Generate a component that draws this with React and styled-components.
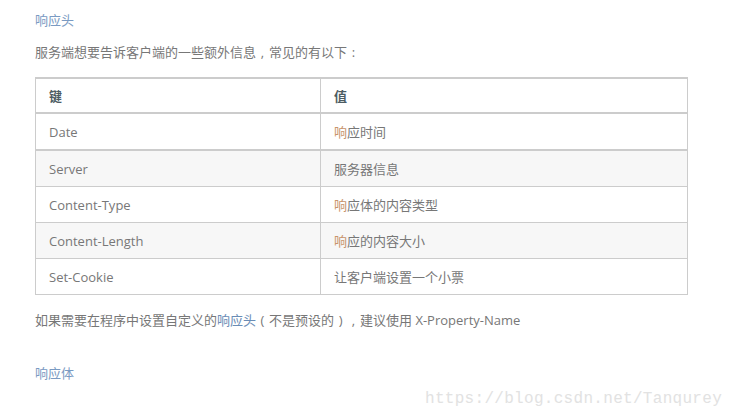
import React from 'react';
import styled, { createGlobalStyle } from 'styled-components';

const GlobalStyle = createGlobalStyle`
  html, body {
    margin: 0;
    padding: 0;
    background: #fff;
  }
  body {
    font-family: "Open Sans", "Noto Sans CJK SC", sans-serif;
    font-size: 13px;
    color: #777;
  }
`;

const rows = [
  { key: 'Date', value: '时间', hl: true, alt: false, thick: true },
  { key: 'Server', value: '服务器信息', hl: false, alt: true },
  { key: 'Content-Type', value: '体的内容类型', hl: true, alt: false },
  { key: 'Content-Length', value: '的内容大小', hl: true, alt: true },
  { key: 'Set-Cookie', value: '让客户端设置一个小票', hl: false, alt: false },
];

const App = () => (
  <Page>
    <GlobalStyle />
    <Heading>响应头</Heading>
    <Para>
      服务端想要告诉客户端的一些额外信息<Punct>,</Punct>常见的有以下<Punct>:</Punct>
    </Para>
    <Table>
      <thead>
        <tr>
          <Th>键</Th>
          <Th>值</Th>
        </tr>
      </thead>
      <tbody>
        {rows.map((row) => (
          <Row key={row.key} $alt={row.alt} $thick={row.thick}>
            <Td>{row.key}</Td>
            <Td>
              {row.hl ? (
                <>
                  <Hl>响</Hl>应{row.value}
                </>
              ) : (
                row.value
              )}
            </Td>
          </Row>
        ))}
      </tbody>
    </Table>
    <Para $top={16}>
      如果需要在程序中设置自定义的<Link>响应头</Link>
      <Punct>(</Punct>不是预设的<Punct>)</Punct>
      <Punct>,</Punct>建议使用 X-Property-Name
    </Para>
    <Heading $top={35}>响应体</Heading>
    <Watermark>https://blog.csdn.net/Tanqurey</Watermark>
  </Page>
);

const Page = styled.div`
  position: relative;
  width: 735px;
  height: 420px;
  box-sizing: border-box;
  padding: 11px 48px 0 35px;
  overflow: hidden;
`;

const Heading = styled.div`
  margin-top: ${(p) => p.$top || 0}px;
  line-height: 18px;
  color: #7a9ac2;
`;

const Para = styled.p`
  margin: ${(p) => p.$top || 14}px 0 0;
  line-height: 18px;
  color: #777;
`;

/* full-width punctuation box with the narrow glyph centred in it, as the original renders it */
const Punct = styled.span`
  display: inline-block;
  width: 1em;
  text-align: center;
`;

const Link = styled.span`
  color: #6a8cb5;
`;

const Hl = styled.span`
  color: #c8946a;
`;

const Table = styled.table`
  width: 653px;
  margin-top: 16px;
  border-collapse: collapse;
  border-top: 2px solid #ccc;
`;

const Th = styled.th`
  height: 33px;
  padding: 0 13px;
  text-align: left;
  font-weight: 700;
  color: #4d5c63;
  border: 1px solid #ccc;
  border-bottom: 2px solid #ccc;
  border-top: none;
  &:first-child {
    width: 258px;
  }
`;

const Row = styled.tr`
  background: ${(p) => (p.$alt ? '#f7f7f7' : '#fff')};
  border-bottom: ${(p) => (p.$thick ? '2px' : '1px')} solid #ccc;
`;

const Td = styled.td`
  height: 35px;
  padding: 0 13px;
  color: #777;
  border-left: 1px solid #ccc;
  border-right: 1px solid #ccc;
`;

const Watermark = styled.div`
  position: absolute;
  left: 425px;
  top: 390px;
  font-family: "Liberation Mono", monospace;
  font-size: 16px;
  letter-spacing: 0.3px;
  color: #e2e2e2;
`;

export default App;
